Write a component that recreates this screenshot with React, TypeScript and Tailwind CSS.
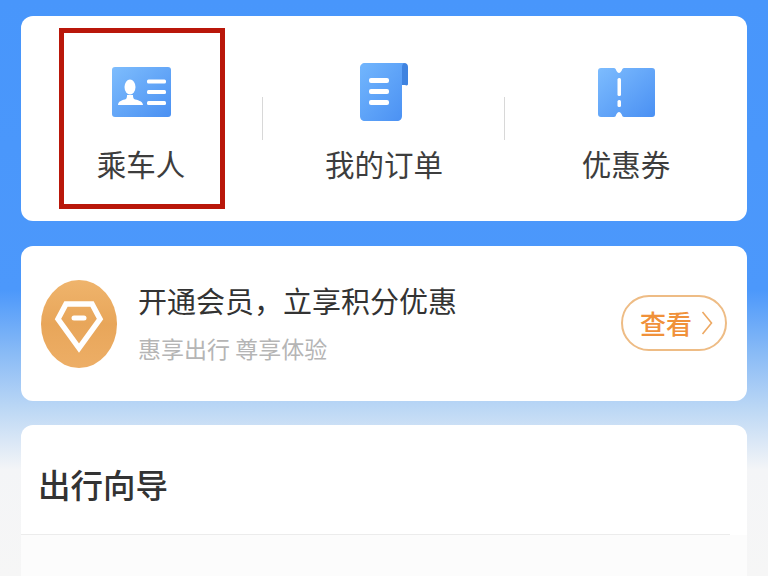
import React from 'react';

const FONT = "font-['Noto_Sans_CJK_SC','Noto_Sans',sans-serif]";

const PassengerIcon = () => (
  <svg width="59" height="50" viewBox="0 0 59 50" className="block">
    <defs>
      <linearGradient id="blueA" x1="0" y1="0" x2="1" y2="1">
        <stop offset="0" stopColor="#7ebdfd" />
        <stop offset="1" stopColor="#4a90f2" />
      </linearGradient>
    </defs>
    <rect width="59" height="50" rx="3" fill="url(#blueA)" />
    <ellipse cx="18" cy="20" rx="5.5" ry="7.5" fill="#fff" />
    <path d="M6 38c0-4 5-5 8-6 1-1 1-3 1-4h6c0 1 0 3 1 4 3 1 9 2 9 6z" fill="#fff" />
    <rect x="35" y="12.5" width="19" height="4" rx="1.5" fill="#fff" />
    <rect x="35" y="23" width="19" height="4" rx="1.5" fill="#fff" />
    <rect x="35" y="34" width="19" height="4" rx="1.5" fill="#fff" />
  </svg>
);

const OrderIcon = () => (
  <svg width="48" height="58" viewBox="0 0 48 58" className="block">
    <defs>
      <linearGradient id="blueB" x1="0" y1="0" x2="1" y2="1">
        <stop offset="0" stopColor="#72b6fd" />
        <stop offset="1" stopColor="#4a90f3" />
      </linearGradient>
    </defs>
    <path d="M40 0h4c3 0 4 2 4 4v17c0 1-1 2-3 1h-5z" fill="#3f83e0" />
    <path d="M5 0h40c-2 0-3 2-3 4v49c0 3-2 5-5 5H5c-3 0-5-2-5-5V5c0-3 2-5 5-5z" fill="url(#blueB)" />
    <rect x="9" y="15" width="20" height="5" rx="2" fill="#fff" />
    <rect x="9" y="26" width="20" height="5" rx="2" fill="#fff" />
    <rect x="9" y="37" width="20" height="5" rx="2" fill="#fff" />
  </svg>
);

const CouponIcon = () => (
  <svg width="57" height="49" viewBox="0 0 57 49" className="block">
    <defs>
      <linearGradient id="blueC" x1="0" y1="0" x2="1" y2="1">
        <stop offset="0" stopColor="#7dbcfe" />
        <stop offset="1" stopColor="#4a90f3" />
      </linearGradient>
    </defs>
    <path d="M3 0h13c1 0 2 1 2 2 1 2 2 3 3 3s2-1 3-3c0-1 1-2 2-2h28c2 0 3 1 3 3v43c0 2-1 3-3 3H26c-1 0-2-1-2-2-1-2-2-3-3-3s-2 1-3 3c0 1-1 2-2 2H3c-2 0-3-1-3-3V3c0-2 1-3 3-3z" fill="url(#blueC)" />
    <rect x="19.5" y="10" width="3.5" height="18" rx="1.5" fill="#fff" />
    <rect x="19.5" y="32" width="3.5" height="7" rx="1.5" fill="#fff" />
  </svg>
);

const MemberBadge = () => (
  <svg width="76" height="88" viewBox="0 0 76 88" className="block shrink-0">
    <defs>
      <linearGradient id="gold" x1="0" y1="0" x2="0" y2="1">
        <stop offset="0" stopColor="#efb46c" />
        <stop offset="0.5" stopColor="#e8a65a" />
        <stop offset="1" stopColor="#edae66" />
      </linearGradient>
    </defs>
    <ellipse cx="38" cy="44" rx="38" ry="44" fill="url(#gold)" />
    <path d="M25 24h26l8 15-21 29-21-29z" fill="none" stroke="#fff" strokeWidth="5.5" strokeLinejoin="miter" />
    <rect x="30.5" y="35.5" width="15" height="5" rx="2.5" fill="#fff" />
  </svg>
);

const items = [
  { label: '乘车人', icon: <PassengerIcon />, pad: 'pr-[2px]' },
  { label: '我的订单', icon: <OrderIcon />, pad: '' },
  { label: '优惠券', icon: <CouponIcon />, pad: '' },
];

export default function App() {
  return (
    <div className={`relative h-[576px] w-[768px] overflow-hidden bg-[linear-gradient(to_bottom,#4896fb_0px,#4c98fb_290px,#86b9f6_350px,#bdd8f5_410px,#f4f5f7_470px,#f6f6f6_576px)] px-[21px] pt-4 ${FONT}`}>
      <div className="flex h-[205px] w-[726px] rounded-xl bg-white">
        {items.map((item, i) => (
          <div key={item.label} className={`relative flex w-[242px] flex-col items-center pt-[46px] ${item.pad}`}>
            <div className="flex h-[60px] items-center">{item.icon}</div>
            <span className="mt-[19px] text-[29.5px] leading-[44px] text-[#3d3d3d]">{item.label}</span>
            {i < 2 && <div className="absolute right-0 top-[81px] h-[43px] w-px bg-[#d8d8d8]" />}
          </div>
        ))}
      </div>

      <div className="mt-[25px] flex h-[155px] w-[726px] items-center rounded-xl bg-white pl-5 pr-5">
        <MemberBadge />
        <div className="ml-[21px] flex flex-1 flex-col">
          <span className="-mt-[5px] text-[29px] leading-[44px] text-[#333333]">开通会员，立享积分优惠</span>
          <span className="mt-[9px] text-[23px] leading-[34px] text-[#b5b5b5]">惠享出行 尊享体验</span>
        </div>
        <div className="mb-[2px] flex h-[56px] w-[106px] items-center rounded-full border-2 border-[#eebc85] pl-[17px]">
          <span className="text-[26px] font-medium leading-none text-[#f0913a]">查看</span>
          <svg width="12" height="26" viewBox="0 0 12 26" className="ml-[9px]">
            <path d="M1.5 2l9 11-9 11" fill="none" stroke="#eda862" strokeWidth="1.6" />
          </svg>
        </div>
      </div>

      <div className="mt-6 h-[300px] w-[726px] overflow-hidden rounded-t-xl bg-white">
        <div className="h-[110px] w-[709px] border-b border-[#ececec] pl-[17px] pt-[35px]">
          <span className="text-[32.5px] font-medium leading-[48px] text-[#333333]">出行向导</span>
        </div>
        <div className="h-[190px] bg-[#fcfcfc]" />
      </div>

      {/* 红框标注 */}
      <div className="absolute left-[59px] top-[28px] h-[181px] w-[166px] border-[5px] border-[#b9170a]" />
    </div>
  );
}
